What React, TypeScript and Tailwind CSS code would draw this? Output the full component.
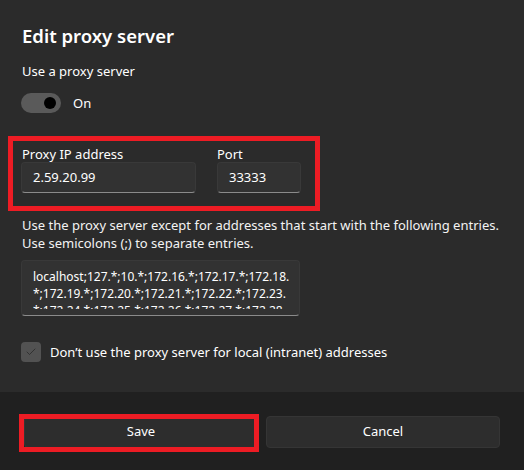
import { Check } from "lucide-react";

const exceptions = [
  "localhost;127.*;10.*;172.16.*;172.17.*;172.18.",
  "*;172.19.*;172.20.*;172.21.*;172.22.*;172.23.",
  "*;172.24.*;172.25.*;172.26.*;172.27.*;172.28.",
];

function TextField({ value, className }: { value: string; className?: string }) {
  return (
    <div
      className={`h-[31px] flex items-center px-[11px] rounded-[4px] bg-[#323232] border border-[#393939] border-b-[#8b8b8b] text-[13px] text-white ${className ?? ""}`}
    >
      {value}
    </div>
  );
}

export default function App() {
  return (
    <div
      className="relative w-[524px] h-[470px] flex flex-col bg-[#2b2b2b] text-white overflow-hidden"
      style={{ fontFamily: '"Noto Sans", "Open Sans", sans-serif' }}
    >
      <div className="h-[392px] shrink-0 px-[22px] pt-[22px] flex flex-col">
        <h1 className="text-[18.5px] leading-[28px] font-semibold">Edit proxy server</h1>

        <p className="mt-[11px] text-[13px] leading-[20px]">Use a proxy server</p>

        <div className="mt-[12px] flex items-center gap-[12px] -ml-px">
          <div className="w-10 h-5 rounded-full bg-[#5a5a5a] flex items-center justify-end pr-[5px]">
            <div className="w-3 h-3 rounded-full bg-black" />
          </div>
          <span className="text-[13px] leading-[20px]">On</span>
        </div>

        <div className="mt-[33px] flex gap-[21px] -ml-px">
          <div className="flex flex-col w-[175px]">
            <label className="text-[13px] leading-[16px] pl-px">Proxy IP address</label>
            <TextField value="2.59.20.99" />
          </div>
          <div className="flex flex-col w-[84px]">
            <label className="text-[13px] leading-[16px]">Port</label>
            <TextField value="33333" />
          </div>
        </div>

        <p className="mt-[23px] text-[13px] leading-[18px] text-[#f3f3f3] whitespace-nowrap">
          Use the proxy server except for addresses that start with the following entries.
          <br />
          Use semicolons (;) to separate entries.
        </p>

        <div className="mt-[8px] -ml-px w-[279px] h-[56px] rounded-[4px] bg-[#323232] border border-[#393939] border-b-[#8b8b8b] pt-[7px] pb-[6px] pl-[11px] pr-[4px]">
          <div className="h-[41px] overflow-hidden text-[12px] leading-[17px] whitespace-nowrap">
            {exceptions.map((line) => (
              <div key={line}>{line}</div>
            ))}
          </div>
        </div>

        <div className="mt-[26px] -ml-px flex items-center gap-[9px]">
          <div className="w-5 h-5 rounded-[4px] bg-[#525252] flex items-center justify-center">
            <Check className="w-[12px] h-[12px] text-[#1e1e1e]" strokeWidth={1.25} />
          </div>
          <span className="text-[13px] leading-[20px]">
            Don’t use the proxy server for local (intranet) addresses
          </span>
        </div>
      </div>

      <div className="flex-1 bg-[#202020] p-6 flex gap-2">
        <button className="flex-1 h-8 rounded-[4px] bg-[#2d2d2d] border border-[#353535] text-[13px] text-white">
          Save
        </button>
        <button className="flex-1 h-8 rounded-[4px] bg-[#2d2d2d] border border-[#353535] text-[13px] text-white">
          Cancel
        </button>
      </div>

      {/* red annotation boxes */}
      <div className="absolute left-[8px] top-[136px] w-[312px] h-[75px] border-[5px] border-[#ed1c24] pointer-events-none" />
      <div className="absolute left-[19px] top-[414px] w-[240px] h-[38px] border-[5px] border-[#ed1c24] pointer-events-none" />
    </div>
  );
}
